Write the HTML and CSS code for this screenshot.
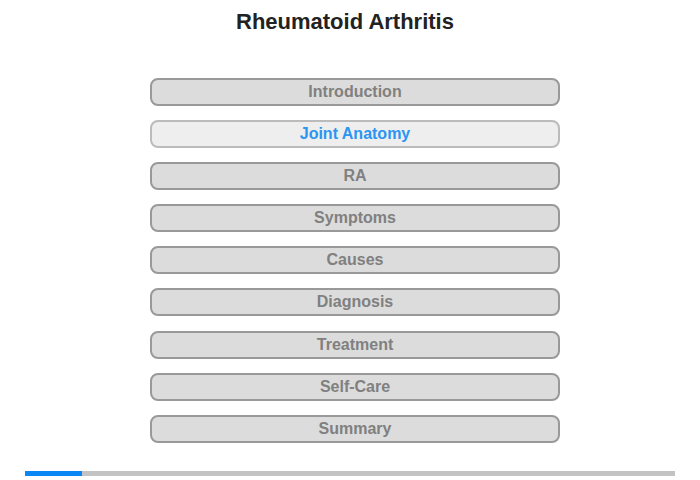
FILE: index.html
```html
<!DOCTYPE html>
<html lang="en">
<head>
    <title>Rheumatoid Arthritis</title>
    <meta charset="utf-8" />
    <link rel="stylesheet" href="styles.css">
</head>
<body>
<div class="page">
    <h1 class="title">Rheumatoid Arthritis</h1>
    <!--menu-->
    <ul class="menu">
        <li><a href="#" class="menu-item">Introduction</a></li>
        <li><a href="#" class="menu-item active">Joint Anatomy</a></li>
        <li><a href="#" class="menu-item">RA</a></li>
        <li><a href="#" class="menu-item">Symptoms</a></li>
        <li><a href="#" class="menu-item">Causes</a></li>
        <li><a href="#" class="menu-item">Diagnosis</a></li>
        <li><a href="#" class="menu-item">Treatment</a></li>
        <li><a href="#" class="menu-item">Self-Care</a></li>
        <li><a href="#" class="menu-item">Summary</a></li>
    </ul>
    <!--progress-->
    <div class="progress">
        <div class="progress-fill" style="width: 57px"></div>
    </div>
</div>
</body>
</html>
```

FILE: styles.css
```css
html, body{margin:0;padding:0;background:#fff;}
body{font-family:"Liberation Sans", Arial, sans-serif;}

.page{
    width:700px;
    height:480px;
    display:flex;
    flex-direction:column;
}
.title{
    margin:0;
    padding:8px 10px 0 0;
    height:28px;
    line-height:28px;
    font-size:22px;
    font-weight:bold;
    color:#222;
    text-align:center;
}

/*menu*/
.menu{
    list-style:none;
    margin:42px 0 0 150px;
    padding:0;
    width:410px;
    display:flex;
    flex-direction:column;
    gap:14.1px;
}
.menu li{margin:0;padding:0;}
.menu-item{
    display:block;
    box-sizing:border-box;
    height:28px;
    line-height:24px;
    border:2px solid #999;
    border-radius:8px;
    background-color:#dcdcdc;
    color:#808080;
    font-size:16px;
    font-weight:bold;
    text-align:center;
    text-decoration:none;
}
.menu-item.active{
    background-color:#eeeeee;
    border-color:#bbb;
    color:#2b95f2;
}

/*progress*/
.progress{
    margin:28px 0 0 25px;
    width:650px;
    height:5px;
    background-color:#c3c3c3;
}
.progress-fill{
    height:100%;
    background-color:#0a87f5;
}
```
